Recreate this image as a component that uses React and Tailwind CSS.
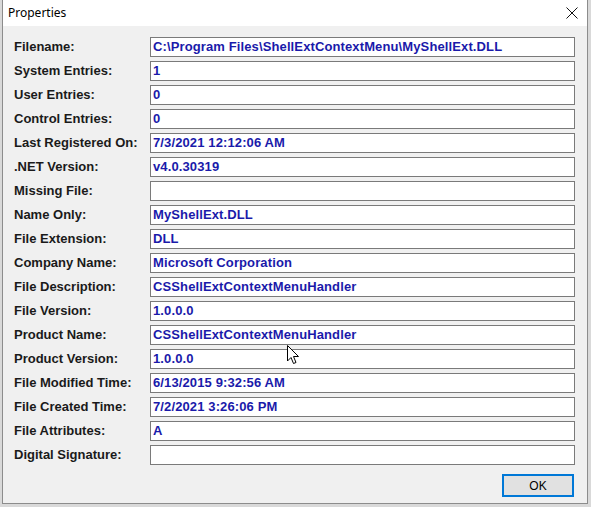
import React from 'react'

const rows = [
    ['Filename:', 'C:\\Program Files\\ShellExtContextMenu\\MyShellExt.DLL'],
    ['System Entries:', '1'],
    ['User Entries:', '0'],
    ['Control Entries:', '0'],
    ['Last Registered On:', '7/3/2021 12:12:06 AM'],
    ['.NET Version:', 'v4.0.30319'],
    ['Missing File:', ''],
    ['Name Only:', 'MyShellExt.DLL'],
    ['File Extension:', 'DLL'],
    ['Company Name:', 'Microsoft Corporation'],
    ['File Description:', 'CSShellExtContextMenuHandler'],
    ['File Version:', '1.0.0.0'],
    ['Product Name:', 'CSShellExtContextMenuHandler'],
    ['Product Version:', '1.0.0.0'],
    ['File Modified Time:', '6/13/2015 9:32:56 AM'],
    ['File Created Time:', '7/2/2021 3:26:06 PM'],
    ['File Attributes:', 'A'],
    ['Digital Signature:', ''],
]

const Cursor = () => (
    <svg className="absolute left-[287px] top-[345px]" width="13" height="20" viewBox="0 0 13 20">
        <path d="M0.5 0.5 L0.5 16 L4 12.5 L6.5 18.5 L9 17.5 L6.5 11.5 L11.5 11.5 Z" fill="#fff" stroke="#000" strokeWidth="1" strokeLinejoin="round" />
    </svg>
)

export default function App() {
    return (
        <div className="w-[591px] h-[507px] bg-[#d9d9d9] relative overflow-hidden" style={{ fontFamily: '"Liberation Sans", Arial, sans-serif' }}>
            <div className="ml-[2px] w-[586px] h-[504px] border border-[#8c8c8c] border-t-0 bg-[#f0f0f0] flex flex-col">
                <div className="h-[26px] bg-white flex items-center justify-between pl-[5px] pr-[9px]">
                    <span className="text-[12px] text-black" style={{ fontFamily: '"Noto Sans", "Liberation Sans", sans-serif' }}>Properties</span>
                    <svg width="12" height="12" viewBox="0 0 12 12">
                        <path d="M0.5 0.5 L11.5 11.5 M11.5 0.5 L0.5 11.5" stroke="#111" strokeWidth="1" />
                    </svg>
                </div>
                <div className="flex flex-col gap-[4px] pt-[11px] pl-[11px] pr-[12px]">
                    {rows.map(([label, value]) => (
                        <div key={label} className="flex items-center h-[20px]">
                            <div className="w-[136px] text-[13px] font-bold text-[#1a1a1a]">{label}</div>
                            <div className="w-[425px] h-[20px] bg-white border border-[#7a7a7a] pl-[2px] flex items-center text-[13px] font-bold tracking-[0.12px] text-[#1a1aaa] whitespace-nowrap overflow-hidden">
                                {value}
                            </div>
                        </div>
                    ))}
                </div>
                <div className="flex justify-end pr-[13px] pt-[9px]">
                    <button className="w-[72px] h-[23px] bg-[#e1e1e1] border-2 border-[#0078d7] text-[12px] text-black flex items-center justify-center">
                        OK
                    </button>
                </div>
            </div>
            <Cursor />
        </div>
    )
}
